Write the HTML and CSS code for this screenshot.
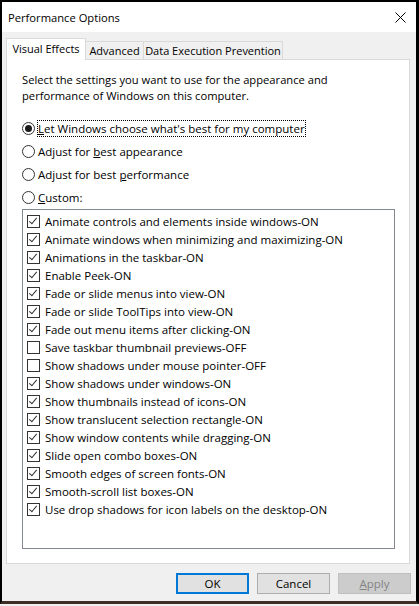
FILE: index.html
```html
<!DOCTYPE html>
<html>
<head>
<meta charset="utf-8">
<title>Performance Options</title>
<link rel="stylesheet" href="styles.css">
</head>
<body>
<div class="window">
  <div class="titlebar">
    <span class="title">Performance Options</span>
    <svg class="close" width="11" height="11" viewBox="0 0 11 11"><path d="M0.5 0.5 L10.5 10.5 M10.5 0.5 L0.5 10.5" stroke="#000" stroke-width="1" fill="none"/></svg>
  </div>
  <div class="content">
    <div class="tabs">
      <div class="tab active t1">Visual Effects</div>
      <div class="tab t2">Advanced</div>
      <div class="tab t3">Data Execution Prevention</div>
    </div>
    <div class="panel">
      <p class="desc">Select the settings you want to use for the appearance and<br>performance of Windows on this computer.</p>
      <div class="radios">
        <div class="radio"><span class="rb checked"></span><span class="lbl focus"><u>L</u>et Windows choose what's best for my computer</span></div>
        <div class="radio"><span class="rb"></span><span class="lbl">Adjust for <u>b</u>est appearance</span></div>
        <div class="radio"><span class="rb"></span><span class="lbl">Adjust for best <u>p</u>erformance</span></div>
        <div class="radio"><span class="rb"></span><span class="lbl"><u>C</u>ustom:</span></div>
      </div>
      <div class="listbox">
        <div class="item"><span class="cb on"></span>Animate controls and elements inside windows-ON</div>
        <div class="item"><span class="cb on"></span>Animate windows when minimizing and maximizing-ON</div>
        <div class="item"><span class="cb on"></span>Animations in the taskbar-ON</div>
        <div class="item"><span class="cb on"></span>Enable Peek-ON</div>
        <div class="item"><span class="cb on"></span>Fade or slide menus into view-ON</div>
        <div class="item"><span class="cb on"></span>Fade or slide ToolTips into view-ON</div>
        <div class="item"><span class="cb on"></span>Fade out menu items after clicking-ON</div>
        <div class="item"><span class="cb"></span>Save taskbar thumbnail previews-OFF</div>
        <div class="item"><span class="cb"></span>Show shadows under mouse pointer-OFF</div>
        <div class="item"><span class="cb on"></span>Show shadows under windows-ON</div>
        <div class="item"><span class="cb on"></span>Show thumbnails instead of icons-ON</div>
        <div class="item"><span class="cb on"></span>Show translucent selection rectangle-ON</div>
        <div class="item"><span class="cb on"></span>Show window contents while dragging-ON</div>
        <div class="item"><span class="cb on"></span>Slide open combo boxes-ON</div>
        <div class="item"><span class="cb on"></span>Smooth edges of screen fonts-ON</div>
        <div class="item"><span class="cb on"></span>Smooth-scroll list boxes-ON</div>
        <div class="item"><span class="cb on"></span>Use drop shadows for icon labels on the desktop-ON</div>
      </div>
    </div>
    <div class="buttons">
      <div class="btn default">OK</div>
      <div class="btn">Cancel</div>
      <div class="btn disabled"><u>A</u>pply</div>
    </div>
  </div>
</div>
</body>
</html>
```

FILE: styles.css
```css
html, body {
  margin: 0;
  padding: 0;
  background: #f0f0f0;
}
body {
  font-family: "Open Sans", "Noto Sans", sans-serif;
  font-size: 11.5px;
  color: #000;
}
.window {
  width: 419px;
  height: 604px;
  box-sizing: border-box;
  border-top: 2px solid #000;
  border-left: 2px solid #000;
  border-right: 3px solid #000;
  border-bottom: 3px solid #3d2d25;
  background: #f0f0f0;
  display: flex;
  flex-direction: column;
}
.titlebar {
  height: 30px;
  background: #fff;
  display: flex;
  align-items: center;
  justify-content: space-between;
  padding: 0 10px 0 6px;
  flex: none;
}
.title {
  font-size: 11.2px;
}
.close {
  display: block;
  margin-top: 1px;
}
.content {
  padding: 6px 6px 0 4px;
}
.tabs {
  display: flex;
  align-items: flex-end;
  height: 21px;
  font-size: 11px;
}
.tab {
  box-sizing: border-box;
  height: 18px;
  border: 1px solid #d9d9d9;
  border-bottom: none;
  border-left: none;
  background: #f0f0f0;
  text-align: center;
  line-height: 18px;
  white-space: nowrap;
}
.tab.active {
  height: 22px;
  border-left: 1px solid #d9d9d9;
  background: #fff;
  margin-bottom: -1px;
  position: relative;
  z-index: 1;
  line-height: 19px;
}
.t1 { width: 80px; }
.t2 { width: 58px; }
.t3 { width: 139px; }
.panel {
  box-sizing: border-box;
  height: 505px;
  border: 1px solid #d9d9d9;
  background: #fff;
  padding: 12px 14px 0 15px;
}
.desc {
  margin: 0;
  font-size: 11.2px;
  line-height: 16px;
  white-space: nowrap;
}
.radios {
  margin-top: 13px;
}
.radio {
  height: 23px;
  display: flex;
  align-items: center;
}
.rb {
  box-sizing: border-box;
  width: 13px;
  height: 13px;
  border: 1px solid #333;
  border-radius: 50%;
  background: #fff;
  display: flex;
  align-items: center;
  justify-content: center;
  flex: none;
}
.rb.checked::after {
  content: "";
  width: 7px;
  height: 7px;
  border-radius: 50%;
  background: #1a1a1a;
}
.lbl {
  margin-left: 3px;
  line-height: 15px;
  white-space: nowrap;
}
.lbl.focus {
  margin-left: 2px;
  border: 1px dotted #000;
  padding-right: 0;
}
.listbox {
  box-sizing: border-box;
  width: 373px;
  height: 340px;
  border: 1px solid #828790;
  padding: 2px 0 0 4px;
}
.item {
  height: 18px;
  display: flex;
  align-items: center;
  white-space: nowrap;
}
.cb {
  box-sizing: border-box;
  width: 13px;
  height: 13px;
  border: 1px solid #333;
  background: #fff;
  margin-right: 5px;
  flex: none;
  position: relative;
}
.cb.on::after {
  content: "";
  position: absolute;
  left: 3px;
  top: 0px;
  width: 3px;
  height: 7px;
  border-right: 1px solid #333;
  border-bottom: 1px solid #333;
  transform: rotate(40deg);
}
.buttons {
  margin-top: 9px;
  margin-right: -1px;
  display: flex;
  justify-content: flex-end;
  gap: 8px;
}
.btn {
  box-sizing: border-box;
  width: 73px;
  height: 21px;
  border: 1px solid #adadad;
  background: #e1e1e1;
  display: flex;
  align-items: center;
  justify-content: center;
}
.btn.default {
  border: 2px solid #0078d7;
}
.btn.disabled {
  border-color: #bfbfbf;
  background: #cccccc;
  color: #838383;
}
```
